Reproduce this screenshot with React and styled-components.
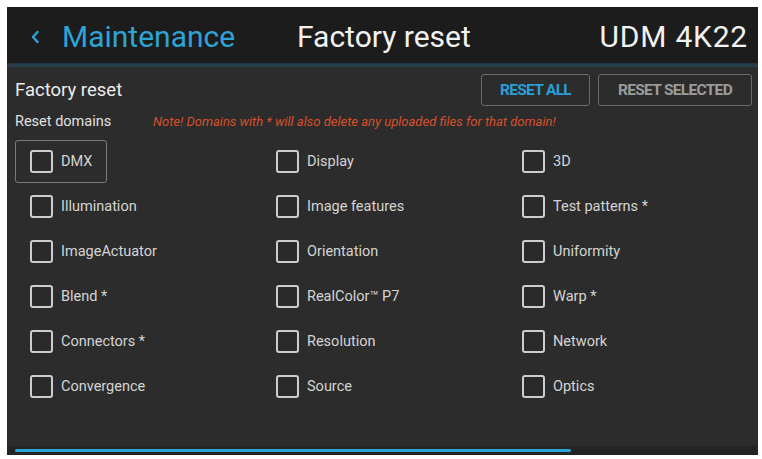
import React from "react";
import styled, { createGlobalStyle } from "styled-components";

const GlobalStyle = createGlobalStyle`
  html, body {
    margin: 0;
    padding: 0;
    background: #ffffff;
  }
  body {
    font-family: Roboto, "Liberation Sans", sans-serif;
  }
`;

const domains = [
  ["DMX", "Display", "3D"],
  ["Illumination", "Image features", "Test patterns *"],
  ["ImageActuator", "Orientation", "Uniformity"],
  ["Blend *", "RealColor\u2122 P7", "Warp *"],
  ["Connectors *", "Resolution", "Network"],
  ["Convergence", "Source", "Optics"],
];

function App() {
  const progress = 74.8;
  return (
    <Page>
      <GlobalStyle />
      <Panel>
        <Header>
          <BackLink>
            <Chevron viewBox="0 0 12 16">
              <path d="M8.5 3 L4 8 L8.5 13" fill="none" stroke="currentColor" strokeWidth="2.4" strokeLinecap="round" strokeLinejoin="round" />
            </Chevron>
            Maintenance
          </BackLink>
          <HeaderTitle>Factory reset</HeaderTitle>
          <DeviceName>UDM 4K22</DeviceName>
        </Header>
        <Separator />
        <Content>
          <TopRow>
            <SectionTitle>Factory reset</SectionTitle>
            <Buttons>
              <ActionButton $primary>RESET ALL</ActionButton>
              <ActionButton>RESET SELECTED</ActionButton>
            </Buttons>
          </TopRow>
          <NoteRow>
            <SubTitle>Reset domains</SubTitle>
            <Note>Note! Domains with * will also delete any uploaded files for that domain!</Note>
          </NoteRow>
          <Grid>
            {domains.flat().map((name, i) => (
              <Item key={name} $focused={i === 0}>
                <Box />
                <Label>{name}</Label>
              </Item>
            ))}
          </Grid>
        </Content>
        <ProgressTrack>
          <ProgressBar style={{ width: `${progress}%` }} />
        </ProgressTrack>
      </Panel>
    </Page>
  );
}

export default App;

const Page = styled.div`
  width: 762px;
  height: 459px;
  padding: 7px 4px 4px 7px;
  box-sizing: border-box;
  background: #ffffff;
`;

const Panel = styled.div`
  width: 751px;
  height: 448px;
  background: #2c2c2c;
  display: flex;
  flex-direction: column;
  overflow: hidden;
`;

const Header = styled.div`
  height: 56px;
  background: #1c1c1c;
  display: flex;
  align-items: center;
  padding: 3px 10px 0 20px;
  box-sizing: border-box;
  color: #f2f2f2;
  font-size: 30px;
  flex-shrink: 0;
`;

const BackLink = styled.div`
  display: flex;
  align-items: center;
  color: #2ea3d6;
  width: 270px;
`;

const Chevron = styled.svg`
  width: 12px;
  height: 16px;
  margin-right: 21px;
  margin-left: 2px;
`;

const HeaderTitle = styled.div`
  flex: 1;
`;

const DeviceName = styled.div`
  letter-spacing: 0.8px;
`;

const Separator = styled.div`
  height: 4px;
  background: linear-gradient(#1e3640, #2a4450);
  flex-shrink: 0;
`;

const Content = styled.div`
  flex: 1;
  padding: 6px 6px 0 8px;
`;

const TopRow = styled.div`
  display: flex;
  justify-content: space-between;
  align-items: center;
  height: 34px;
`;

const SectionTitle = styled.div`
  color: #ececec;
  font-size: 18.5px;
`;

const Buttons = styled.div`
  display: flex;
  gap: 8px;
`;

const ActionButton = styled.div`
  height: 32px;
  box-sizing: border-box;
  border: 1.5px solid #6b6b6b;
  border-radius: 3px;
  display: flex;
  align-items: center;
  justify-content: center;
  padding: 0 12px;
  min-width: ${(p) => (p.$primary ? "109px" : "154px")};
  font-size: 15.5px;
  font-weight: 700;
  letter-spacing: -0.7px;
  color: ${(p) => (p.$primary ? "#2a9fd6" : "#9c9c9c")};
`;

const NoteRow = styled.div`
  display: flex;
  align-items: center;
  height: 28px;
`;

const SubTitle = styled.div`
  color: #e0e0e0;
  font-size: 14.5px;
  width: 138px;
`;

const Note = styled.div`
  color: #d8502a;
  font-size: 13px;
  font-style: italic;
  letter-spacing: 0;
`;

const Grid = styled.div`
  display: grid;
  grid-template-columns: repeat(3, 246px);
  row-gap: 2px;
  margin-top: 5px;
`;

const Item = styled.div`
  height: 43px;
  box-sizing: border-box;
  display: flex;
  align-items: center;
  padding: 0 14px;
  border: 1.5px solid ${(p) => (p.$focused ? "#7a7a7a" : "transparent")};
  border-radius: 3px;
  justify-self: start;
`;

const Box = styled.div`
  width: 23px;
  height: 23px;
  box-sizing: border-box;
  border: 2px solid #cdcdcd;
  border-radius: 3px;
  background: #2a2a2a;
  flex-shrink: 0;
`;

const Label = styled.span`
  margin-left: 8px;
  color: #d4d4d4;
  font-size: 14.5px;
`;

const ProgressTrack = styled.div`
  height: 9px;
  background: #242424;
  padding: 3px 0 0 8px;
  box-sizing: border-box;
  flex-shrink: 0;
`;

const ProgressBar = styled.div`
  height: 3px;
  background: #2aa6d6;
  border-radius: 2px;
`;
